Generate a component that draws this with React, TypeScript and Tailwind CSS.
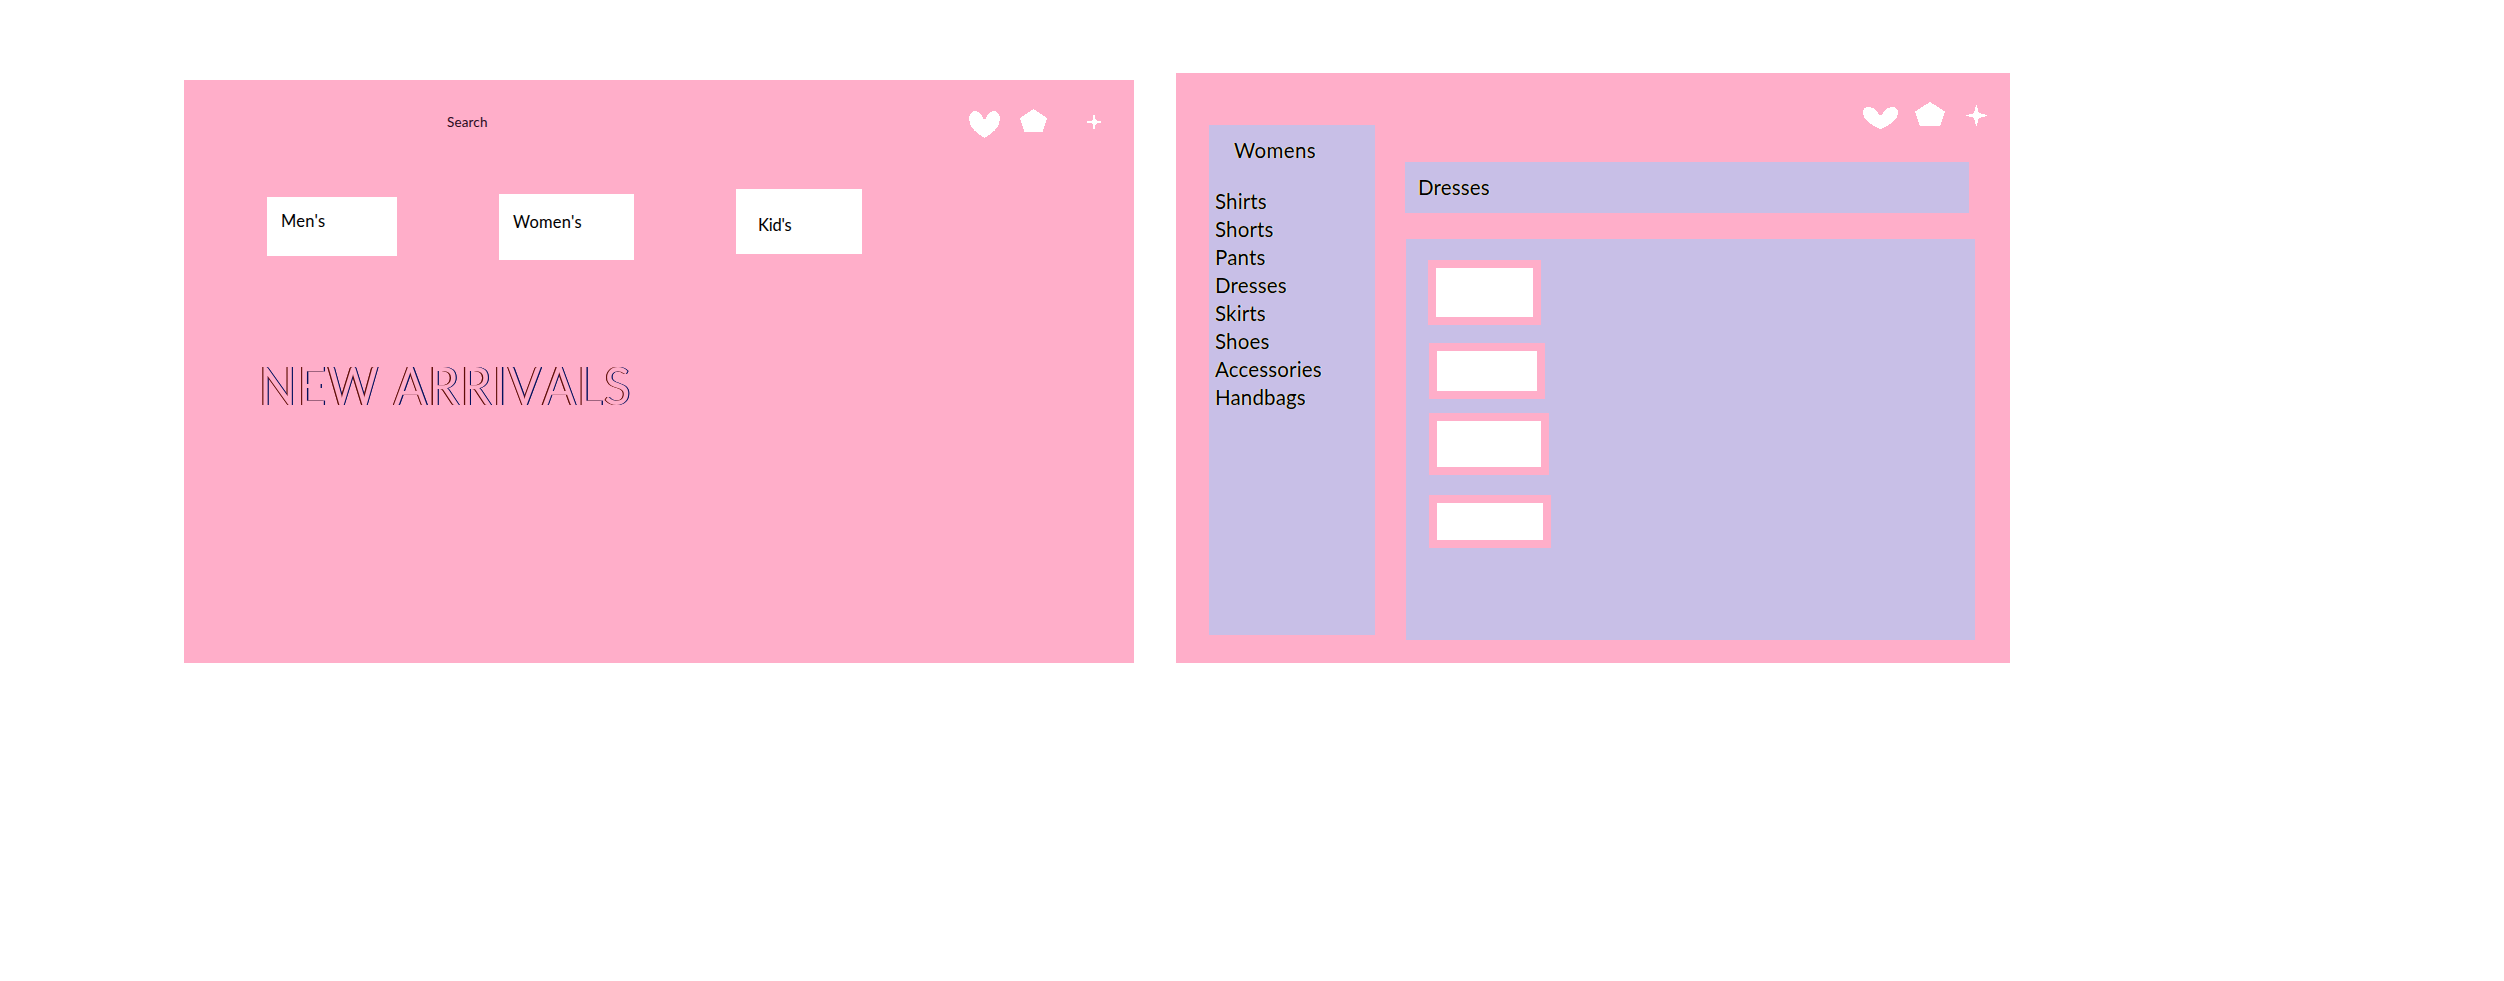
const categories = ['Shirts', 'Shorts', 'Pants', 'Dresses', 'Skirts', 'Shoes', 'Accessories', 'Handbags'];

const halo = '[text-shadow:-1px_0_0_#fbe3c4,1px_0_0_#d3e6fb]';

function Heart({ className, d, viewBox }: { className: string; d: string; viewBox: string }) {
  return (
    <svg className={className} viewBox={viewBox} fill="white" shapeRendering="crispEdges">
      <path d={d} />
    </svg>
  );
}

function Pentagon({ className }: { className: string }) {
  return (
    <svg className={className} viewBox="0 0 30 24" preserveAspectRatio="none" fill="white" shapeRendering="crispEdges">
      <path d="M15 0 L30 9.5 L25 24 H5 L0 9.5 Z" />
    </svg>
  );
}

function HomeScreen() {
  return (
    <section className="mt-[80px] h-[583px] w-[950px] bg-[#ffaec9]">
      <header className="flex h-[109px] items-start">
        <span className="mt-[32px] ml-[263px] w-[522px] text-[13.5px] leading-[20px] tracking-[0.15px] text-[#2a0a1c]">Search</span>
        <Heart
          className="mt-[31px] h-[27px] w-[31px]"
          viewBox="0 0 31 27"
          d="M15.5 27 C9 23 0 17 0 8 C0 3 3 0 6 0 C10 0 13 4 14.5 8 H16.5 C18 4 21 0 25 0 C28 0 31 3 31 8 C31 17 22 23 15.5 27 Z"
        />
        <Pentagon className="mt-[29px] ml-[20px] h-[23px] w-[27px]" />
        <svg className="mt-[35px] ml-[40px] h-[14px] w-[14px]" viewBox="0 0 14 14" fill="white" shapeRendering="crispEdges">
          <path d="M6 0 H8 V4 L9 5 L10 6 H14 V8 H10 L9 9 L8 10 V14 H6 V10 L5 9 L4 8 H0 V6 H4 L5 5 L6 4 Z" />
        </svg>
      </header>
      <nav className="flex items-start text-[16.5px] leading-[20px] tracking-[0.25px]">
        <div className="mt-[8px] ml-[83px] h-[59px] w-[130px] bg-white pt-[14px] pl-[14px]">Men's</div>
        <div className="mt-[5px] ml-[102px] h-[66px] w-[135px] bg-white pt-[18px] pl-[14px]">Women's</div>
        <div className="ml-[102px] h-[65px] w-[126px] bg-white pt-[26px] pl-[22px] tracking-[-0.2px]">Kid's</div>
      </nav>
      <h1 className="mt-[95px] ml-[75px] w-fit origin-left scale-x-[0.93] text-[52.5px] leading-[60px] tracking-[1.7px] whitespace-nowrap text-[#ffaec9] [font-kerning:none] [text-shadow:-1.2px_0_0_#5e0c08,1.2px_0_0_#04105c,-1.2px_0_0_#7a2a18,1.2px_0_0_#06206e]">
        NEW ARRIVALS
      </h1>
    </section>
  );
}

function CategoryScreen() {
  return (
    <section className="mt-[73px] ml-[42px] flex h-[590px] w-[834px] items-start bg-[#ffaec9] text-[20.5px] tracking-[0.15px]">
      <aside className={`mt-[52px] ml-[33px] h-[510px] w-[166px] bg-[#c8bfe7] pt-[11px] ${halo}`}>
        <h2 className="pl-[25px] leading-[28px] tracking-[0.4px]">Womens</h2>
        <ul className="mt-[23px] pl-[6px] leading-[28px]">
          {categories.map((name) => (
            <li key={name}>{name}</li>
          ))}
        </ul>
      </aside>
      <div className="ml-[30px] w-[605px]">
        <div className="flex h-[89px] items-start">
          <Heart
            className="mt-[34px] ml-[458px] h-[22px] w-[35px]"
            viewBox="0 0 35 22"
            d="M17.5 22 C9 19 0 13 0 6 C0 2 2 0 6 0 C11 0 14 4 16 8 H19 C21 4 24 0 29 0 C33 0 35 2 35 6 C35 13 26 19 17.5 22 Z"
          />
          <Pentagon className="mt-[29px] ml-[17px] h-[24px] w-[30px]" />
          <svg className="mt-[32px] ml-[21px] h-[21px] w-[21px]" viewBox="0 0 21 21" fill="white" shapeRendering="crispEdges">
            <path d="M10 0 H11 L12 5 L13 8 L16 9 L21 10 V11 L16 12 L13 13 L12 16 L11 21 H10 L9 16 L8 13 L5 12 L0 11 V10 L5 9 L8 8 L9 5 Z" />
          </svg>
        </div>
        <div className={`h-[51px] w-[564px] bg-[#c8bfe7] pt-[11px] pl-[13px] leading-[28px] ${halo}`}>Dresses</div>
        <main className="mt-[26px] ml-[1px] h-[401px] w-[569px] bg-[#c8bfe7] pt-[21px] pl-[22px]">
          <div className="h-[65px] w-[113px] border-8 border-[#ffaec9] bg-white" />
          <div className="mt-[18px] ml-px h-[56px] w-[116px] border-8 border-[#ffaec9] bg-white" />
          <div className="mt-[14px] ml-px h-[62px] w-[120px] border-8 border-[#ffaec9] bg-white" />
          <div className="mt-[20px] ml-px h-[53px] w-[122px] border-8 border-[#ffaec9] bg-white" />
        </main>
      </div>
    </section>
  );
}

export default function App() {
  return (
    <div className="flex h-[981px] w-[2504px] items-start bg-white pl-[184px] font-[Lato,sans-serif] text-black">
      <HomeScreen />
      <CategoryScreen />
    </div>
  );
}
